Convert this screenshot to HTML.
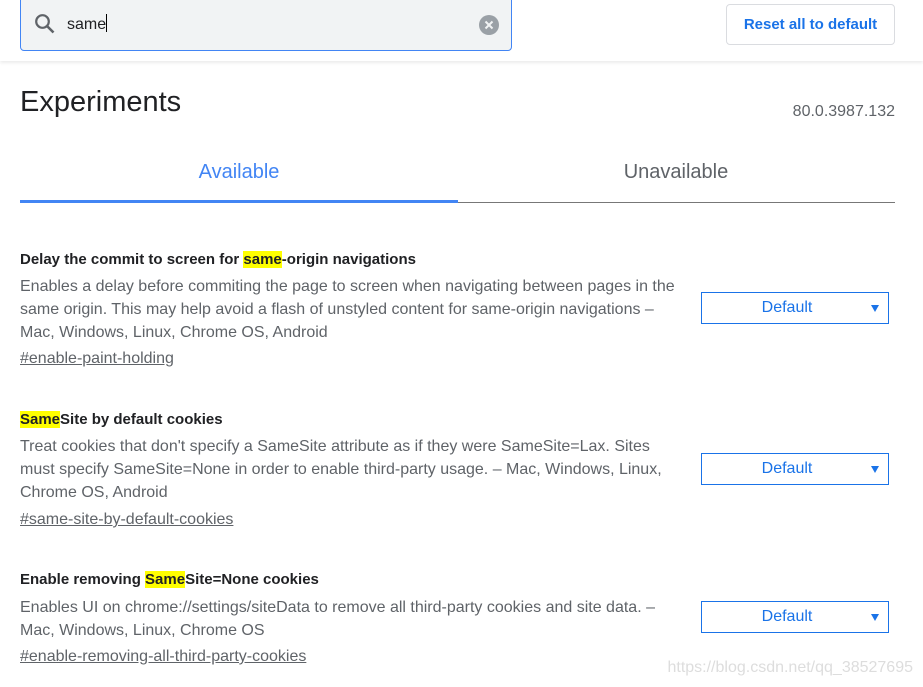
<!DOCTYPE html>
<html><head><meta charset="utf-8"><style>
*{margin:0;padding:0;box-sizing:border-box}
body{width:923px;height:687px;overflow:hidden;background:#fff;font-family:"Liberation Sans",Arial,sans-serif;position:relative}
.hdr{position:absolute;left:0;top:0;width:923px;height:61px;background:#fff;box-shadow:0 2px 3px rgba(0,0,0,.08)}
.search{position:absolute;left:20px;top:-4px;width:492px;height:55px;background:#f1f3f4;border:1px solid #4285f4;border-radius:4px}
.search .t{position:absolute;left:46px;top:17px;font-size:16px;color:#202124}
.cur{display:inline-block;width:1px;height:18px;background:#000;vertical-align:-3px}
.reset{position:absolute;left:726px;top:4px;width:169px;height:41px;border:1px solid #dadce0;border-radius:4px;color:#1a73e8;font-size:15px;font-weight:bold;text-align:center;line-height:39px}
.abs{position:absolute;white-space:nowrap}
h1{position:absolute;left:20px;top:86px;font-size:29px;font-weight:normal;color:#202124}
.ver{right:28px;top:103px;font-size:16px;color:#5f6368}
.tab{font-size:20px;top:161px}
.t1{left:0;width:478px;text-align:center;color:#4285f4}
.t2{left:458px;width:436px;text-align:center;color:#5f6368}
.ul1{position:absolute;left:20px;top:200px;width:438px;height:3px;background:#4285f4}
.ul2{position:absolute;left:458px;top:202px;width:437px;height:1px;background:#777}
.title{font-size:15px;font-weight:bold;color:#202124;left:20px}
.hl{background:#ff0}
.desc{font-size:16px;color:#5f6368;left:20px;line-height:23px}
.link{font-size:16px;color:#5f6368;left:20px;text-decoration:underline}
.sel{position:absolute;left:701px;width:188px;height:32px;border:1px solid #1a73e8;color:#1a73e8;font-size:16px;line-height:30px;text-align:center;padding-right:16px}
.sel:after{content:"";position:absolute;right:9px;top:12px;border-left:4px solid transparent;border-right:4px solid transparent;border-top:7px solid #1a73e8}
.wm{right:10px;top:659px;font-size:16px;color:#ddd}
</style></head><body>
<div class="hdr">
<div class="search">
<svg style="position:absolute;left:12px;top:15px" width="24" height="24" viewBox="0 0 24 24"><circle cx="9.5" cy="9.5" r="6.3" fill="none" stroke="#5f6368" stroke-width="2.2"/><path d="M14 14l6.5 6.5" stroke="#5f6368" stroke-width="2.6"/></svg>
<div class="t">same<span class="cur"></span></div>
<svg style="position:absolute;left:458px;top:18px" width="20" height="20" viewBox="0 0 20 20"><circle cx="10" cy="10" r="10" fill="#9aa0a6"/><path d="M6.5 6.5l7 7M13.5 6.5l-7 7" stroke="#f1f3f4" stroke-width="2"/></svg>
</div>
<div class="reset">Reset all to default</div>
</div>
<h1>Experiments</h1>
<div class="abs ver">80.0.3987.132</div>
<div class="abs tab t1">Available</div>
<div class="abs tab t2">Unavailable</div>
<div class="ul1"></div><div class="ul2"></div>

<div class="abs title" style="top:251px">Delay the commit to screen for <span class="hl">same</span>-origin navigations</div>
<div class="abs desc" style="top:275px">Enables a delay before commiting the page to screen when navigating between pages in the<br>same origin. This may help avoid a flash of unstyled content for same-origin navigations –<br>Mac, Windows, Linux, Chrome OS, Android</div>
<div class="abs link" style="top:350px">#enable-paint-holding</div>
<div class="sel" style="top:292px">Default</div>

<div class="abs title" style="top:411px"><span class="hl">Same</span>Site by default cookies</div>
<div class="abs desc" style="top:435px">Treat cookies that don't specify a SameSite attribute as if they were SameSite=Lax. Sites<br>must specify SameSite=None in order to enable third-party usage. – Mac, Windows, Linux,<br>Chrome OS, Android</div>
<div class="abs link" style="top:511px">#same-site-by-default-cookies</div>
<div class="sel" style="top:453px">Default</div>

<div class="abs title" style="top:571px">Enable removing <span class="hl">Same</span>Site=None cookies</div>
<div class="abs desc" style="top:596px">Enables UI on chrome://settings/siteData to remove all third-party cookies and site data. –<br>Mac, Windows, Linux, Chrome OS</div>
<div class="abs link" style="top:648px">#enable-removing-all-third-party-cookies</div>
<div class="sel" style="top:601px">Default</div>

<div class="abs wm">https://blog.csdn.net/qq_38527695</div>
</body></html>
